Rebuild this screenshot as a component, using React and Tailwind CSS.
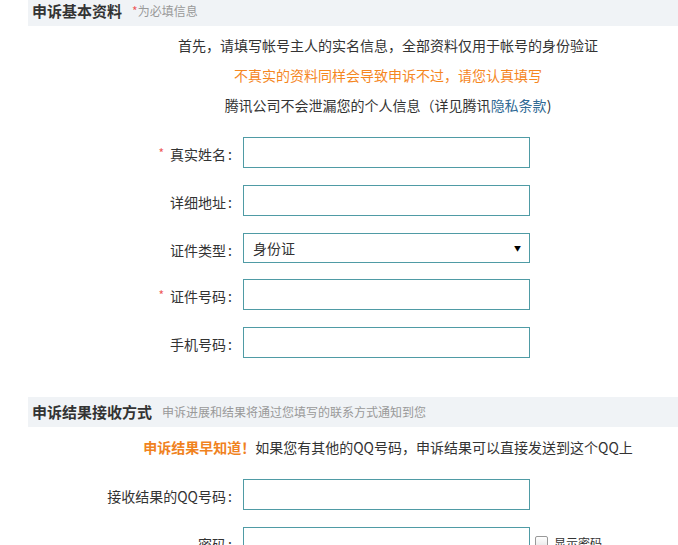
import React from 'react';

// a single labelled form row
function Row({ label, required, children, extra, className = '' }) {
  return (
    <div className={`flex items-center ${className}`}>
      <label className="w-[215px] shrink-0 text-right pt-[4px] pr-[8px] text-[14px] text-[#333] whitespace-nowrap">
        {required && <span className="text-[#ee5a5a] text-[12px] mr-[6px] relative -top-[2px]">*</span>}
        {label}
        <span className="inline-block w-[9px] pl-[2px] text-left">:</span>
      </label>
      {children}
      {extra}
    </div>
  );
}

function TextInput() {
  return <input type="text" className="w-[287px] h-[31px] border border-[#4f9ba5] bg-white outline-none px-2" />;
}

export default function App() {
  return (
    <div
      className="w-[678px] h-[545px] overflow-hidden bg-white text-[#333]"
      style={{ fontFamily: '"Noto Sans CJK SC", "Noto Sans", sans-serif' }}
    >
      <div className="w-[720px] ml-[28px]">
        {/* Section 1 header */}
        <div className="h-[30px] -mt-[4px] bg-[#f0f3f6] flex items-center pl-[4px]">
          <span className="text-[15px] font-bold text-[#333]">申诉基本资料</span>
          <span className="ml-[10px] text-[12px] text-[#999]">
            <span className="text-[#ee5a5a]">*</span>为必填信息
          </span>
        </div>

        {/* Notes */}
        <div className="mt-[4px] text-center text-[14px] leading-[30px]">
          <p>首先，请填写帐号主人的实名信息，全部资料仅用于帐号的身份验证</p>
          <p className="text-[#f5871f]">不真实的资料同样会导致申诉不过，请您认真填写</p>
          <p>
            腾讯公司不会泄漏您的个人信息（详见腾讯<a className="text-[#2f6a95]">隐私条款</a>)
          </p>
        </div>

        {/* Form fields */}
        <div className="mt-[17px]">
          <Row label="真实姓名" required className="mb-[17px]">
            <TextInput />
          </Row>
          <Row label="详细地址" className="mb-[17px]">
            <TextInput />
          </Row>
          <Row label="证件类型" className="mb-[16px]">
            <div className="w-[287px] h-[30px] border border-[#4f9ba5] bg-white flex items-center justify-between pl-[9px] pr-[8px] text-[14px]">
              <span>身份证</span>
              <span className="text-[7px] text-black">▼</span>
            </div>
          </Row>
          <Row label="证件号码" required className="mb-[17px]">
            <TextInput />
          </Row>
          <Row label="手机号码">
            <TextInput />
          </Row>
        </div>

        {/* Section 2 header */}
        <div className="mt-[39px] h-[30px] bg-[#f0f3f6] flex items-center pl-[4px]">
          <span className="text-[15px] font-bold text-[#333]">申诉结果接收方式</span>
          <span className="ml-[10px] text-[12px] text-[#999]">申诉进展和结果将通过您填写的联系方式通知到您</span>
        </div>

        <p className="mt-[5px] text-center text-[14px] leading-[30px]">
          <span className="font-bold text-[#f0821e]">申诉结果早知道！</span>
          如果您有其他的QQ号码，申诉结果可以直接发送到这个QQ上
        </p>

        <div className="mt-[17px]">
          <Row label="接收结果的QQ号码" className="mb-[17px]">
            <TextInput />
          </Row>
          <Row
            label="密码"
            extra={
              <label className="flex items-center ml-[5px] text-[12px] text-[#333]">
                <span className="w-[13px] h-[13px] border border-[#999] rounded-[2px] bg-gradient-to-b from-white to-[#e6e6e6] mr-[6px]" />
                显示密码
              </label>
            }
          >
            <input type="password" className="w-[287px] h-[31px] border border-[#4f9ba5] bg-white outline-none px-2" />
          </Row>
        </div>
      </div>
    </div>
  );
}
